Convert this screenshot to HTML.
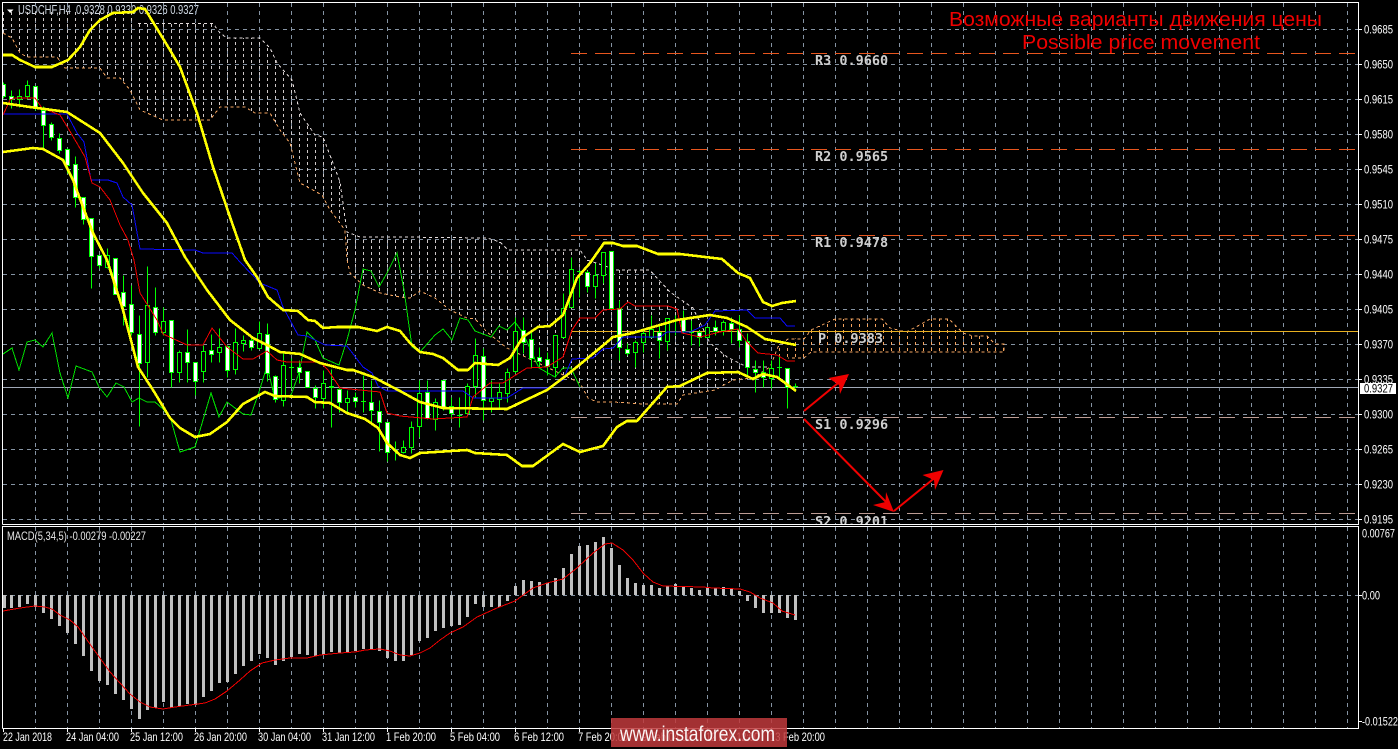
<!DOCTYPE html>
<html lang="en"><head><meta charset="utf-8"><title>USDCHF H4</title>
<style>
html,body{margin:0;padding:0;background:#000;width:1398px;height:749px;overflow:hidden}
svg{display:block;font-family:"Liberation Sans",sans-serif}
.ax{fill:#fff;font-size:12px}
.pv{fill:#cfcfcf;font-family:"DejaVu Sans Mono","Liberation Mono",monospace;font-size:13.5px;font-weight:bold}
</style></head><body>
<svg width="1398" height="749" viewBox="0 0 1398 749" xmlns="http://www.w3.org/2000/svg">
<defs>
<pattern id="hw" x="3" y="0" width="8" height="6" patternUnits="userSpaceOnUse"><rect width="1" height="3" fill="#cfc9c9"/></pattern>
<pattern id="ho" x="3" y="0" width="8" height="6" patternUnits="userSpaceOnUse"><rect width="1" height="3" fill="#f4a460"/></pattern>
<clipPath id="mc"><rect x="3" y="3" width="1355" height="521"/></clipPath>
<clipPath id="sc"><rect x="3" y="527" width="1355" height="201"/></clipPath>
</defs>
<rect width="1398" height="749" fill="#000"/>

<text x="18" y="14" fill="#cfd8e2" font-size="12.500" textLength="181" lengthAdjust="spacingAndGlyphs">USDCHF,H4&#160;&#160;0.9328 0.9330 0.9326 0.9327</text>
<path d="M7 9.500h6.500l-3.250 3.500z" fill="#fff"/>

<g stroke="#8593a3" fill="none" shape-rendering="crispEdges" stroke-dasharray="4 4">
<path clip-path="url(#mc)" d="M3 29.500H1358M3 64.500H1358M3 99.500H1358M3 134.500H1358M3 169.500H1358M3 204.500H1358M3 239.500H1358M3 274.500H1358M3 309.500H1358M3 344.500H1358M3 379.500H1358M3 414.500H1358M3 449.500H1358M3 484.500H1358M3 519.500H1358"/>
<path d="M3 595.500H1358"/>
<path d="M35.500 3V524M67.500 3V524M99.500 3V524M131.500 3V524M163.500 3V524M195.500 3V524M227.500 3V524M259.500 3V524M291.500 3V524M323.500 3V524M355.500 3V524M387.500 3V524M419.500 3V524M451.500 3V524M483.500 3V524M515.500 3V524M547.500 3V524M579.500 3V524M611.500 3V524M643.500 3V524M675.500 3V524M707.500 3V524M739.500 3V524M771.500 3V524M803.500 3V524M835.500 3V524M867.500 3V524M899.500 3V524M931.500 3V524M963.500 3V524M995.500 3V524M1027.500 3V524M1059.500 3V524M1091.500 3V524M1123.500 3V524M1155.500 3V524M1187.500 3V524M1219.500 3V524M1251.500 3V524M1283.500 3V524M1315.500 3V524M1347.500 3V524"/>
<path d="M35.500 527V728M67.500 527V728M99.500 527V728M131.500 527V728M163.500 527V728M195.500 527V728M227.500 527V728M259.500 527V728M291.500 527V728M323.500 527V728M355.500 527V728M387.500 527V728M419.500 527V728M451.500 527V728M483.500 527V728M515.500 527V728M547.500 527V728M579.500 527V728M611.500 527V728M643.500 527V728M675.500 527V728M707.500 527V728M739.500 527V728M771.500 527V728M803.500 527V728M835.500 527V728M867.500 527V728M899.500 527V728M931.500 527V728M963.500 527V728M995.500 527V728M1027.500 527V728M1059.500 527V728M1091.500 527V728M1123.500 527V728M1155.500 527V728M1187.500 527V728M1219.500 527V728M1251.500 527V728M1283.500 527V728M1315.500 527V728M1347.500 527V728"/>
</g>

<!-- Kumo -->
<g clip-path="url(#mc)" shape-rendering="crispEdges">
<polygon fill="url(#hw)" points="3,10 135,10 138,23 213,23 220,33 227,38 260,38 270,48 277,63 292,80 300,113 315,135 323,137 333,163 340,182 347,232 360,237 400,238 487,238 500,242 508,250 580,251 587,260 617,270 650,270 657,278 670,292 693,308 710,343 727,357 747,367 770,367 753,378 733,380 715,390 683,395 677,404 643,404 613,402 597,402 588,398 580,383 515,352 507,348 488,333 475,319 467,318 450,310 435,298 420,291 410,298 400,297 380,293 363,285 350,273 347,260 345,230 330,210 322,195 300,183 290,143 280,130 270,113 255,113 245,107 220,107 210,120 163,120 147,113 140,110 130,90 120,78 107,78 100,68 65,68 57,57 27,57 20,53 12,38 3,33"/>
<polygon fill="url(#ho)" points="770,367 778,347 788,339 804,338 811,330 835,319 882,319 890,328 906,332 916,327 930,319 949,319 963,333 973,336 987,336 995,344 1004,344 1004,352 811,352 804,358 788,359"/>
<path fill="none" stroke="#e4dcdc" stroke-dasharray="3 3" d="M138 23.500H213L220 33 227 38H260L270 48 277 63 292 80 300 113 315 135 323 137 333 163 340 182 347 232 360 237H400L487 238 500 242 508 250H580L587 260 617 270H650L657 278 670 292 693 308 710 343 727 357 747 367H770"/>
<path fill="none" stroke="#f4a460" stroke-dasharray="3 3" d="M3 33L12 38 20 53 27 57H57L65 68H100L107 78H120L130 90 140 110 147 113 163 120H210L220 107H245L255 113H270L280 130 290 143 300 183 322 195 330 210 345 230 347 260 350 273 363 285 380 293 400 297 410 298 420 291 435 298 450 310 467 318 475 319 488 333 507 348 515 352 580 383 588 398 597 402H613L643 404H677L683 395 715 390 733 380 753 378 770 367 778 347 788 339H804L811 330 835 319H882L890 328 906 332 916 327 930 319H949L963 333 973 336H987L995 344H1004V352H811L804 358H788"/>
</g>

<!-- Pivot levels -->
<g shape-rendering="crispEdges" fill="none" clip-path="url(#mc)">
<path stroke="#e8561e" stroke-dasharray="16 8" d="M571 53.500H1358M571 149.500H1358M571 235.500H1358"/>
<path stroke="#bc9c94" stroke-dasharray="16 8" d="M571 417.500H1358M571 513.500H1358"/>
<path stroke="#e8b020" d="M571 331.500H1358"/>
<path stroke="#a0a8b6" d="M3 387.500H1358"/>
</g>
<g clip-path="url(#mc)">
<text class="pv" x="815" y="65">R3 0.9660</text>
<text class="pv" x="815" y="161">R2 0.9565</text>
<text class="pv" x="815" y="247">R1 0.9478</text>
<text class="pv" x="818" y="343">P 0.9383</text>
<text class="pv" x="815" y="429">S1 0.9296</text>
<text class="pv" x="815" y="526">S2 0.9201</text>
</g>

<!-- Chikou -->
<polyline shape-rendering="crispEdges" fill="none" stroke="#00e000" stroke-width="1" points="3,354 12,348 19,370 27,342 35,340 43,347 52,333 60,373 68,398 76,366 92,372 99,387 107,397 116,383 124,387 132,402 139,398 147,402 155,402 163,409 171,420 180,452 195,447 203,420 211,393 219,417 227,402 243,414 251,415 259,392 267,366 275,399 291,395 299,373 307,332 315,340 323,358 339,365 347,340 355,310 363,269 371,271 379,287 387,273 397,253 404,290 412,347 420,352 435,335 443,329 452,340 460,318 468,320 475,331 491,337 499,326 507,330 515,322 523,333 532,353 539,368 555,377 563,368 571,368 580,387"/>

<!-- Candles -->
<g transform="translate(0 .5)" shape-rendering="crispEdges" stroke="#00ff00" stroke-width="1" clip-path="url(#mc)">
<path fill="none" d="M3.500 82V98M11.500 90V108M19.500 89V107M27.500 80V99M35.500 86V110M43.500 106V148M51.500 122V140M59.500 133V153M67.500 148V173M75.500 156V207M83.500 197V224M91.500 218V288M99.500 255V268M107.500 248V268M115.500 258V294M123.500 275V325M131.500 285V335M139.500 315V426M147.500 266V377M155.500 287V335M163.500 307V335M171.500 320V387M179.500 350V382M187.500 329V382M195.500 362V395M203.500 345V382M211.500 334V362M219.500 328V362M227.500 345V377M235.500 328V374M243.500 335V351M251.500 335V350M259.500 321V349M267.500 323V381M275.500 375V402M283.500 353V406M291.500 358V388M299.500 360V383M307.500 371V387M315.500 385V408M323.500 370V408M331.500 369V427M339.500 388V412M347.500 390V413M355.500 392V407M363.500 375V412M371.500 380V423M379.500 400V451M387.500 422V461M395.500 441V460M403.500 440V453M411.500 421V453M419.500 380V437M427.500 380V419M435.500 398V430M443.500 380V410M451.500 397V419M459.500 397V427M467.500 383V413M475.500 338V397M483.500 348V420M491.500 380V412M499.500 382V408M507.500 368V402M515.500 317V373M523.500 317V353M531.500 330V368M539.500 347V368M547.500 352V375M555.500 335V377M563.500 293V338M571.500 257V307M579.500 270V297M587.500 270V292M595.500 263V298M603.500 252V283M611.500 251V309M619.500 300V360M627.500 343V355M635.500 340V367M643.500 330V352M651.500 315V337M659.500 323V358M667.500 318V350M675.500 315V335M683.500 310V333M691.500 320V345M699.500 330V346M707.500 327V337M715.500 320V335M723.500 320V335M731.500 317V343M739.500 315V347M747.500 333V376M755.500 360V392M763.500 360V387M771.500 360V388M779.500 355V380M787.500 368V408M795.500 383V388"/>
<path fill="none" d="M289 367h5M361 401h5M457 415h5M577 271h5M689 332h5M777 367h5M793 386h5M393 450h5"/>
<path fill="#000" d="M17.500 96h4V99h-4zM25.500 85h4V96h-4zM105.500 255h4V267h-4zM145.500 305h4V362h-4zM161.500 321h4V332h-4zM177.500 352h4V372h-4zM201.500 351h4V371h-4zM217.500 347h4V352h-4zM233.500 342h4V369h-4zM241.500 340h4V343h-4zM257.500 333h4V348h-4zM281.500 365h4V400h-4zM321.500 383h4V398h-4zM345.500 398h4V402h-4zM401.500 447h4V452h-4zM409.500 427h4V447h-4zM417.500 393h4V426h-4zM433.500 402h4V419h-4zM465.500 386h4V413h-4zM473.500 355h4V386h-4zM489.500 398h4V401h-4zM497.500 392h4V399h-4zM505.500 372h4V393h-4zM513.500 331h4V371h-4zM553.500 335h4V367h-4zM561.500 308h4V337h-4zM569.500 269h4V307h-4zM593.500 275h4V286h-4zM601.500 252h4V275h-4zM633.500 342h4V352h-4zM641.500 333h4V342h-4zM649.500 329h4V337h-4zM665.500 318h4V341h-4zM705.500 327h4V337h-4zM721.500 322h4V330h-4zM769.500 368h4V378h-4z"/>
<path fill="#fff" d="M1.500 84h4V96h-4zM9.500 96h4V99h-4zM33.500 86h4V108h-4zM41.500 110h4V125h-4zM49.500 124h4V137h-4zM57.500 138h4V150h-4zM65.500 149h4V165h-4zM73.500 164h4V197h-4zM81.500 197h4V219h-4zM89.500 218h4V256h-4zM97.500 255h4V265h-4zM113.500 258h4V294h-4zM121.500 292h4V306h-4zM129.500 304h4V332h-4zM137.500 334h4V363h-4zM153.500 307h4V332h-4zM169.500 320h4V372h-4zM185.500 352h4V362h-4zM193.500 362h4V381h-4zM209.500 350h4V354h-4zM225.500 346h4V370h-4zM249.500 340h4V347h-4zM265.500 334h4V373h-4zM273.500 376h4V399h-4zM297.500 367h4V372h-4zM305.500 371h4V387h-4zM313.500 388h4V397h-4zM329.500 386h4V387h-4zM337.500 389h4V402h-4zM353.500 397h4V401h-4zM369.500 402h4V410h-4zM377.500 411h4V422h-4zM385.500 422h4V452h-4zM425.500 392h4V418h-4zM441.500 380h4V407h-4zM449.500 406h4V413h-4zM481.500 356h4V400h-4zM521.500 330h4V342h-4zM529.500 339h4V358h-4zM537.500 357h4V361h-4zM545.500 359h4V366h-4zM585.500 272h4V286h-4zM609.500 251h4V308h-4zM617.500 308h4V347h-4zM625.500 349h4V353h-4zM657.500 332h4V340h-4zM681.500 318h4V331h-4zM697.500 332h4V337h-4zM713.500 327h4V331h-4zM729.500 323h4V329h-4zM737.500 329h4V340h-4zM745.500 341h4V367h-4zM753.500 369h4V372h-4zM761.500 372h4V377h-4zM785.500 368h4V387h-4z"/>
</g>

<!-- Blue -->
<polyline clip-path="url(#mc)" shape-rendering="crispEdges" fill="none" stroke="#0a0aff" stroke-width="1" points="3,114 67,114 77,133 84,142 91,180 108,180 117,183 123,197 132,205 140,249 195,250 203,253 232,253 240,262 260,283 277,290 283,307 298,335 307,336 325,345 347,346 363,367 372,373 378,386 387,391 463,391 473,398 507,398 523,388 547,388 563,380 572,359 593,358 603,349 613,348 623,337 660,337 667,332 690,332 705,325 715,311 747,310 755,318 780,318 787,326 795,326"/>
<!-- Red -->
<polyline clip-path="url(#mc)" shape-rendering="crispEdges" fill="none" stroke="#f00000" stroke-width="1" points="3,115 10,100 15,98 35,98 42,108 60,115 68,128 78,145 85,157 92,183 100,187 110,200 120,225 128,240 134,260 140,293 157,320 163,334 187,345 203,345 212,328 227,347 243,359 253,359 267,351 277,360 287,362 320,362 328,370 340,388 350,389 380,392 387,413 400,416 433,419 467,417 473,397 490,383 503,383 527,368 547,367 563,357 572,330 580,318 595,318 603,310 620,309 628,302 635,306 668,306 677,309 682,333 700,337 720,332 738,329 747,342 758,353 777,355 787,361 795,361"/>
<!-- Bollinger -->
<g clip-path="url(#mc)" fill="none" stroke="#ffff00" stroke-width="2.600" stroke-linejoin="round" shape-rendering="crispEdges">
<polyline points="3,55 12,55 20,60 35,67 52,67 68,60 80,47 90,30 100,20 113,13 133,12 138,8 145,9 170,50 180,67 197,113 213,167 230,217 245,260 257,277 268,297 283,310 298,311 308,320 315,321 323,328 337,327 358,327 377,331 387,327 400,331 410,343 420,352 433,354 443,358 458,370 468,370 475,363 498,365 510,358 523,337 538,327 550,326 563,315 577,278 590,263 604,243 613,243 623,246 637,246 658,254 680,254 722,259 738,273 750,278 763,302 772,306 782,303 796,301"/>
<polyline points="3,103 30,107 67,112 100,133 123,163 143,193 167,223 185,257 207,290 230,320 253,338 267,345 280,352 300,354 320,363 347,370 353,370 373,377 400,391 420,402 443,408 507,409 547,390 567,375 600,348 613,337 633,333 653,327 677,320 710,315 727,318 747,327 765,339 796,345"/>
<polyline points="3,152 33,148 43,149 63,160 73,180 83,207 93,233 107,260 123,310 138,367 153,390 170,418 180,428 195,437 210,434 227,422 243,404 265,392 275,396 307,397 315,402 330,403 347,413 365,419 378,428 387,443 400,455 410,458 420,453 467,450 475,453 507,455 522,466 533,466 563,444 580,452 603,446 617,427 627,421 637,421 667,387 680,386 707,373 738,372 753,379 763,374 777,377 796,391"/>
</g>

<!-- Arrows -->
<g fill="#f00000" stroke="#f00000">
<path fill="none" stroke-width="2" d="M804 411L843 379M804 419L889 505M894 511L937 476"/>
<path stroke="none" d="M849 374L828.500 378 839 385 840 394z"/>
<path stroke="none" d="M894 512L873 505 885.500 502 886 492z"/>
<path stroke="none" d="M943.500 470L922.500 475 934 480 935 490z"/>
</g>

<!-- Title -->
<text x="949" y="26" fill="#f00000" font-size="20" textLength="373" lengthAdjust="spacingAndGlyphs">Возможные варианты движения цены</text>
<text x="1022" y="49" fill="#f00000" font-size="20" textLength="238" lengthAdjust="spacingAndGlyphs">Possible price movement</text>

<!-- MACD -->
<g fill="#c0c0c0" shape-rendering="crispEdges">
<path d="M3 595h3V608H3zM10 595h3V608h-3zM18 595h3V607h-3zM26 595h3V604h-3zM34 595h3V607h-3zM42 595h3V613h-3zM50 595h3V619h-3zM58 595h3V626h-3zM66 595h3V633h-3zM74 595h3V644h-3zM82 595h3V656h-3zM90 595h3V671h-3zM98 595h3V681h-3zM106 595h3V685h-3zM114 595h3V694h-3zM122 595h3V700h-3zM130 595h3V709h-3zM138 595h3V719h-3zM146 595h3V710h-3zM154 595h3V708h-3zM162 595h3V702h-3zM170 595h3V708h-3zM178 595h3V706h-3zM186 595h3V704h-3zM194 595h3V705h-3zM202 595h3V697h-3zM210 595h3V691h-3zM218 595h3V683h-3zM226 595h3V682h-3zM234 595h3V674h-3zM242 595h3V666h-3zM250 595h3V661h-3zM258 595h3V654h-3zM266 595h3V658h-3zM274 595h3V665h-3zM282 595h3V661h-3zM290 595h3V657h-3zM298 595h3V654h-3zM306 595h3V655h-3zM314 595h3V656h-3zM322 595h3V655h-3zM330 595h3V652h-3zM338 595h3V653h-3zM346 595h3V652h-3zM354 595h3V651h-3zM362 595h3V649h-3zM370 595h3V649h-3zM378 595h3V651h-3zM386 595h3V658h-3zM394 595h3V661h-3zM402 595h3V661h-3zM410 595h3V655h-3zM418 595h3V641h-3zM426 595h3V638h-3zM434 595h3V631h-3zM442 595h3V628h-3zM450 595h3V626h-3zM458 595h3V625h-3zM466 595h3V617h-3zM474 595h3V604h-3zM482 595h3V607h-3zM490 595h3V607h-3zM498 595h3V607h-3zM506 595h3V601h-3z"/>
<path d="M514 586h3V595h-3zM522 580h3V595h-3zM530 581h3V595h-3zM538 582h3V595h-3zM546 583h3V595h-3zM554 578h3V595h-3zM562 568h3V595h-3zM570 554h3V595h-3zM578 546h3V595h-3zM586 545h3V595h-3zM594 542h3V595h-3zM602 537h3V595h-3zM610 548h3V595h-3zM618 565h3V595h-3zM626 578h3V595h-3zM634 583h3V595h-3zM642 585h3V595h-3zM650 585h3V595h-3zM658 588h3V595h-3zM666 586h3V595h-3zM674 584h3V595h-3zM682 587h3V595h-3zM690 588h3V595h-3zM698 590h3V595h-3zM706 588h3V595h-3zM714 588h3V595h-3zM722 587h3V595h-3zM730 588h3V595h-3zM738 591h3V595h-3z"/>
<path d="M746 595h3V601h-3zM754 595h3V608h-3zM762 595h3V613h-3zM770 595h3V613h-3zM778 595h3V613h-3zM786 595h3V618h-3zM794 595h3V620h-3z"/>
</g>
<polyline shape-rendering="crispEdges" fill="none" stroke="#f00000" stroke-width="1" points="3,611 20,608 35,606 45,607 52,609 60,615 70,620 78,627 85,637 92,647 100,658 110,672 120,683 130,694 140,702 150,707 163,709 175,707 190,705 205,703 215,699 227,691 240,680 250,671 262,663 275,660 290,658 307,658 320,655 340,653 355,652 365,650 380,649 390,651 400,655 410,656 420,653 430,648 440,640 450,633 463,627 477,617 497,608 515,601 533,588 547,583 563,579 577,568 593,553 605,544 612,543 623,550 633,560 643,573 653,582 663,586 703,587 713,588 740,589 750,592 760,598 773,603 782,611 795,615"/>
<text x="7" y="540" fill="#e6e6e6" font-size="12" textLength="139" lengthAdjust="spacingAndGlyphs">MACD(5,34,5) -0.00279 -0.00227</text>

<!-- Frames -->
<g shape-rendering="crispEdges" fill="none" stroke="#fff" stroke-width="1">
<path d="M2.500 524.500V2.500H1358.500V524.500H2.500"/>
<path d="M2.500 728.500V526.500H1358.500V728.500H2.500"/>
<path d="M1358 29.500h4M1358 64.500h4M1358 99.500h4M1358 134.500h4M1358 169.500h4M1358 204.500h4M1358 239.500h4M1358 274.500h4M1358 309.500h4M1358 344.500h4M1358 379.500h4M1358 414.500h4M1358 449.500h4M1358 484.500h4M1358 519.500h4M1358 595.500h4M1358 721.500h4"/>
<path d="M3.500 728v4M67.500 728v4M131.500 728v4M195.500 728v4M259.500 728v4M323.500 728v4M387.500 728v4M451.500 728v4M515.500 728v4M579.500 728v4M643.500 728v4M707.500 728v4M771.500 728v4"/>
</g>

<!-- Price axis -->
<g class="ax">
<text x="1364" y="33.500" textLength="29" lengthAdjust="spacingAndGlyphs">0.9685</text>
<text x="1364" y="68.500" textLength="29" lengthAdjust="spacingAndGlyphs">0.9650</text>
<text x="1364" y="103.500" textLength="29" lengthAdjust="spacingAndGlyphs">0.9615</text>
<text x="1364" y="138.500" textLength="29" lengthAdjust="spacingAndGlyphs">0.9580</text>
<text x="1364" y="173.500" textLength="29" lengthAdjust="spacingAndGlyphs">0.9545</text>
<text x="1364" y="208.500" textLength="29" lengthAdjust="spacingAndGlyphs">0.9510</text>
<text x="1364" y="243.500" textLength="29" lengthAdjust="spacingAndGlyphs">0.9475</text>
<text x="1364" y="278.500" textLength="29" lengthAdjust="spacingAndGlyphs">0.9440</text>
<text x="1364" y="313.500" textLength="29" lengthAdjust="spacingAndGlyphs">0.9405</text>
<text x="1364" y="348.500" textLength="29" lengthAdjust="spacingAndGlyphs">0.9370</text>
<text x="1364" y="383.500" textLength="29" lengthAdjust="spacingAndGlyphs">0.9335</text>
<text x="1364" y="418.500" textLength="29" lengthAdjust="spacingAndGlyphs">0.9300</text>
<text x="1364" y="453.500" textLength="29" lengthAdjust="spacingAndGlyphs">0.9265</text>
<text x="1364" y="488.500" textLength="29" lengthAdjust="spacingAndGlyphs">0.9230</text>
<text x="1364" y="523.500" textLength="29" lengthAdjust="spacingAndGlyphs">0.9195</text>
<text x="1362" y="537.500" textLength="33" lengthAdjust="spacingAndGlyphs">0.00767</text>
<text x="1362" y="599.500" textLength="18" lengthAdjust="spacingAndGlyphs">0.00</text>
<text x="1362" y="725.500" textLength="36" lengthAdjust="spacingAndGlyphs">-0.01522</text>
</g>
<rect x="1360" y="383" width="36" height="11" fill="#fff"/>
<text x="1364" y="392.500" fill="#000" font-size="12" textLength="29" lengthAdjust="spacingAndGlyphs">0.9327</text>

<!-- Time axis -->
<g class="ax">
<text x="3" y="741" textLength="49" lengthAdjust="spacingAndGlyphs">22 Jan 2018</text>
<text x="66" y="741" textLength="53" lengthAdjust="spacingAndGlyphs">24 Jan 04:00</text>
<text x="130" y="741" textLength="53" lengthAdjust="spacingAndGlyphs">25 Jan 12:00</text>
<text x="194" y="741" textLength="53" lengthAdjust="spacingAndGlyphs">26 Jan 20:00</text>
<text x="258" y="741" textLength="53" lengthAdjust="spacingAndGlyphs">30 Jan 04:00</text>
<text x="322" y="741" textLength="53" lengthAdjust="spacingAndGlyphs">31 Jan 12:00</text>
<text x="386" y="741" textLength="50" lengthAdjust="spacingAndGlyphs">1 Feb 20:00</text>
<text x="450" y="741" textLength="50" lengthAdjust="spacingAndGlyphs">5 Feb 04:00</text>
<text x="514" y="741" textLength="50" lengthAdjust="spacingAndGlyphs">6 Feb 12:00</text>
<text x="578" y="741" textLength="50" lengthAdjust="spacingAndGlyphs">7 Feb 20:00</text>
<text x="642" y="741" textLength="50" lengthAdjust="spacingAndGlyphs">9 Feb 04:00</text>
<text x="706" y="741" textLength="53" lengthAdjust="spacingAndGlyphs">12 Feb 12:00</text>
<text x="770" y="741" textLength="55" lengthAdjust="spacingAndGlyphs">13 Feb 20:00</text>
</g>

<!-- Watermark -->
<rect x="611" y="718" width="176" height="29" fill="#c03a3c" fill-opacity=".85"/>
<text x="620" y="741" fill="#fff" fill-opacity=".95" font-size="21" textLength="155" lengthAdjust="spacingAndGlyphs">www.instaforex.com</text>
</svg>
</body></html>
